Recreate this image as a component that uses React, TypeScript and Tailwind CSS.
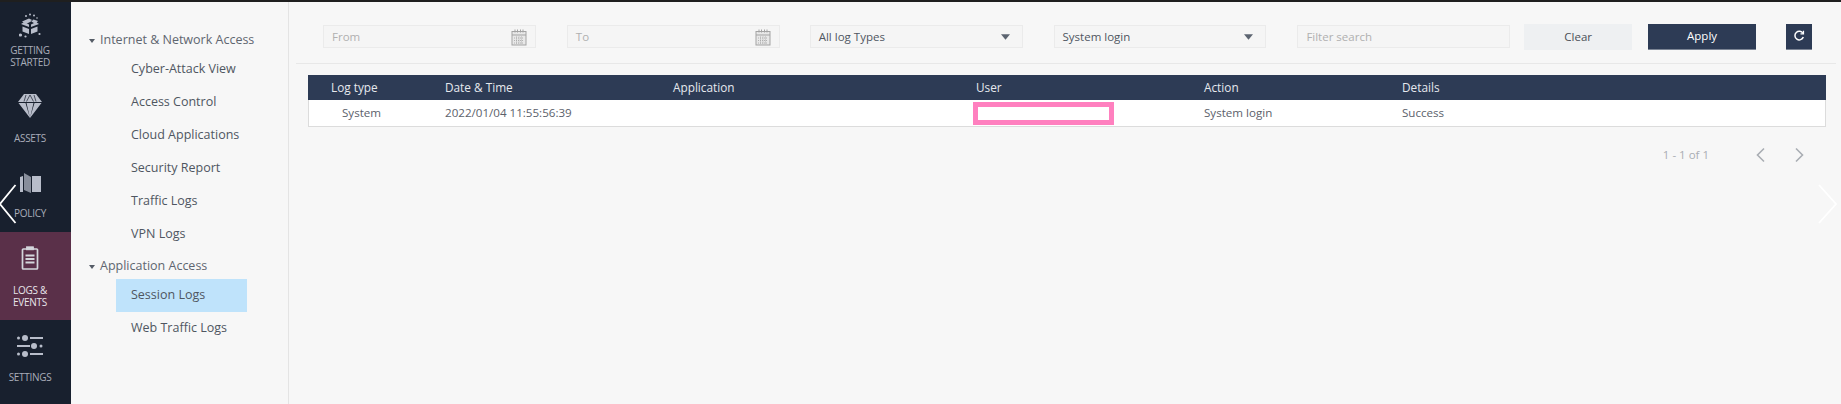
import React from "react";

const Calendar = () => (
  <svg width="16" height="18" viewBox="0 0 16 18" fill="none" stroke="#a3a3a3" strokeWidth="1">
    <rect x="1" y="3.500" width="14" height="13.500" fill="#e8e8e8" />
    <path d="M1 7h14M4 1.500v3M6.500 1.500v3M9.500 1.500v3M12 1.500v3" />
    <path d="M3 10h10M3 12.500h10M3 15h10M5.500 8.500v7.500M8 8.500v7.500M10.500 8.500v7.500" strokeWidth="0.800" strokeDasharray="1 1" />
  </svg>
);

const Caret = () => (
  <svg width="9" height="6" viewBox="0 0 10 6"><path d="M0 0h10L5 6z" fill="#5c6470" /></svg>
);

const iconGift = (
  <svg width="22" height="25" viewBox="0 0 22 25" fill="#b8bdca">
    <path d="M3 8.500l7-3 4 2-7 3.500zM19 8l-4.500-1.500-3 1.500 5 3z" />
    <path d="M2 11l8 3v-2.500l-5-2.500zM20 11l-8 3v-2.500l5-2.500z" />
    <path d="M3.500 13.500l6.500 2.500v5l-6.500-2.500zM18.500 13.500l-6.500 2.500v5l6.500-2.500z" />
    <circle cx="11" cy="1.500" r="1" /><circle cx="15" cy="2.500" r="1" /><circle cx="7" cy="3" r="1" /><circle cx="18" cy="5" r="0.800" />
    <circle cx="1.500" cy="22" r="1.600" /><circle cx="6.500" cy="23.500" r="1.100" /><circle cx="20.500" cy="21" r="1.100" />
  </svg>
);
const iconDiamond = (
  <svg width="26" height="26" viewBox="0 0 26 26" fill="#b8bdca">
    <path d="M7 1h12l6 8H1z" />
    <path d="M1.500 10h7L13 25zM9.500 10h7L13 25zM17.500 10h7L13 25z" />
    <path d="M9 2L7 8.500M17 2l2 6.500M13 2L9.500 8.500M13 2l3.500 6.500" stroke="#18202e" strokeWidth="0.700" fill="none" />
  </svg>
);
const iconMap = (
  <svg width="21" height="22" viewBox="0 0 21 22" fill="#b8bdca">
    <path d="M0 5l3-1v16H0z" />
    <path d="M4 1l7 4v16l-7-3z" opacity="0.7" />
    <path d="M12 4h9v16h-9z" />
  </svg>
);
const iconClip = (
  <svg width="18" height="24" viewBox="0 0 18 24" fill="none" stroke="#d4d6dc" strokeWidth="1.700">
    <rect x="1.500" y="3" width="15" height="20" rx="0.800" />
    <rect x="5.500" y="0.800" width="7" height="3" fill="#d4d6dc" strokeWidth="0.800" />
    <path d="M4.500 9.500h9M4.500 13h9M4.500 16.500h9" strokeWidth="1.800" />
  </svg>
);
const iconSliders = (
  <svg width="26" height="22" viewBox="0 0 26 22" fill="#b8bdca">
    <circle cx="1.500" cy="3" r="1.500" /><circle cx="8" cy="3" r="3" /><rect x="13" y="2" width="13" height="2" />
    <rect x="0" y="10" width="13" height="2" /><circle cx="17" cy="11" r="3" /><circle cx="24" cy="11" r="1.500" />
    <circle cx="1.500" cy="19" r="1.500" /><circle cx="8" cy="19" r="3" /><rect x="13" y="18" width="13" height="2" />
  </svg>
);

const navItems = [
  { label: ["GETTING", "STARTED"], icon: iconGift, h: "h-[80px]", pt: "pt-[11px]", gap: "mt-[6px]" },
  { label: ["ASSETS"], icon: iconDiamond, h: "h-[75px]", pt: "pt-[11px]", gap: "mt-[13px]" },
  { label: ["POLICY"], icon: iconMap, h: "h-[75px]", pt: "pt-[15px]", gap: "mt-[13px]" },
  { label: ["LOGS &", "EVENTS"], icon: iconClip, h: "h-[88px]", pt: "pt-[14px]", gap: "mt-[14px]", active: true },
  { label: ["SETTINGS"], icon: iconSliders, h: "h-[84px]", pt: "pt-[15px]", gap: "mt-[14px]" },
];

const Tree = ({ title, items, className }: { title: string; items: string[]; className?: string }) => (
  <div className={className}>
    <div className="flex items-center h-[25px] pl-[17px] text-[12.500px] text-[#5f6670] whitespace-nowrap">
      <svg width="6" height="4" viewBox="0 0 6 4" className="mr-[5px]"><path d="M0 0h6L3 4z" fill="#555c66" /></svg>
      {title}
    </div>
    {items.map((it) => (
      <div
        key={it}
        className={`flex items-center h-[33px] w-[131px] ml-[44px] pl-[15px] text-[12.500px] whitespace-nowrap text-[#4f5661] ${it === "Session Logs" ? "bg-[#bfe3fb]" : ""}`}
      >
        {it}
      </div>
    ))}
  </div>
);

const box = "flex items-center justify-between h-[23px] w-[213px] px-2 bg-[#f5f5f5] border border-[#ebebeb] text-[11.500px]";

const cols = "grid grid-cols-[136px_227px_304px_228px_198px_1fr]";

export default function App() {
  return (
    <div className="relative h-[404px] w-full overflow-hidden bg-[#f7f7f7] [font-family:'Open_Sans',sans-serif]">
      <div className="h-[2px] bg-[#1f1f1f]" />
      <div className="flex h-[402px]">
        <nav className="w-[71px] shrink-0 bg-[#18202e]">
          {navItems.map((n) => (
            <div
              key={n.label[0]}
              className={`flex flex-col items-center pr-[11px] ${n.h} ${n.pt} ${n.active ? "bg-[#5a3049] text-[#e8e5e9]" : "text-[#a9adb9]"}`}
            >
              {n.icon}
              <div className={`${n.gap} text-[10px] leading-[12px] text-center font-medium tracking-[-0.3px]`}>
                {n.label.map((l) => (
                  <div key={l}>{l}</div>
                ))}
              </div>
            </div>
          ))}
        </nav>
        <aside className="ml-px w-[217px] shrink-0 border-r border-[#e4e4e4] pt-[26px]">
          <Tree
            title="Internet & Network Access"
            items={["Cyber-Attack View", "Access Control", "Cloud Applications", "Security Report", "Traffic Logs", "VPN Logs"]}
          />
          <Tree className="mt-[3px]" title="Application Access" items={["Session Logs", "Web Traffic Logs"]} />
        </aside>
        <main className="flex-1 min-w-0 pl-[7px] pr-[5px]">
          <div className="flex items-center h-[62px] pt-[8px] pl-[27px] pr-[24px] border-b border-[#e8e8e8]">
            <div className={`${box} text-[#b0b0b0]`}>From<Calendar /></div>
            <div className={`${box} ml-[31px] text-[#b0b0b0]`}>To<Calendar /></div>
            <div className={`${box} ml-[30px] text-[#4f5661]`}>All log Types<span className="mr-[4px]"><Caret /></span></div>
            <div className={`${box} ml-[31px] text-[#4f5661]`}>System login<span className="mr-[4px]"><Caret /></span></div>
            <div className={`${box} ml-[31px] text-[#b0b0b0]`}>Filter search</div>
            <button className="ml-[14px] h-[26px] w-[108px] bg-[#eef0f2] text-[11.500px] text-[#4a4f57]">Clear</button>
            <button className="ml-[16px] h-[26px] w-[108px] bg-[#2d3b55] text-[11.500px] text-white border-b border-[#7b8494]">Apply</button>
            <button className="ml-[30px] flex h-[26px] w-[26px] items-center justify-center bg-[#2d3b55] border-b border-[#7b8494]">
              <svg width="12" height="12" viewBox="0 0 12 12" fill="none" stroke="#fff" strokeWidth="1.500">
                <path d="M10 3.500A4.300 4.300 0 1 0 10.300 7" />
                <path d="M7.500 3.800h3v-3" strokeWidth="1.200" />
              </svg>
            </button>
          </div>
          <div className="mt-[11px] ml-[12px] mr-[10px]">
            <div className={`${cols} h-[25px] items-center bg-[#2d3b55] text-[11.800px] text-[#e6e9ee]`}>
              <div className="pl-[23px]">Log type</div>
              <div className="pl-px">Date &amp; Time</div>
              <div className="pl-[2px]">Application</div>
              <div className="pl-px">User</div>
              <div className="pl-px">Action</div>
              <div className="pl-px">Details</div>
            </div>
            <div className={`${cols} h-[27px] items-center bg-white border-x border-b border-[#dcdcdc] text-[11.600px] text-[#5b616b]`}>
              <div className="pl-[33px]">System</div>
              <div>2022/01/04 11:55:56:39</div>
              <div />
              <div className="-ml-[3px] h-[23px] w-[141px] border-[5px] border-[#ff80bf]" />
              <div>System login</div>
              <div>Success</div>
            </div>
            <div className="flex items-center justify-end h-[56px] pr-[21px] text-[11.500px] text-[#a9adb3]">
              <span>1 - 1 of 1</span>
              <svg width="11" height="16" viewBox="0 0 11 16" fill="none" stroke="#a9adb3" strokeWidth="1.600" className="ml-[46px]"><path d="M9 1.500L2.500 8 9 14.500" /></svg>
              <svg width="11" height="16" viewBox="0 0 11 16" fill="none" stroke="#a9adb3" strokeWidth="1.600" className="ml-[28px]"><path d="M2 1.500L8.500 8 2 14.500" /></svg>
            </div>
          </div>
        </main>
      </div>
      <svg width="18" height="40" viewBox="0 0 18 40" fill="none" stroke="#fff" strokeWidth="1.800" className="absolute left-0 top-[184px]">
        <path d="M15.500 1L0 20l15.500 19" />
      </svg>
      <svg width="22" height="40" viewBox="0 0 22 40" fill="none" stroke="#ffffff" strokeWidth="1.800" className="absolute left-[1817px] top-[184px]">
        <path d="M2 1l17 19L2 39" />
      </svg>
    </div>
  );
}
